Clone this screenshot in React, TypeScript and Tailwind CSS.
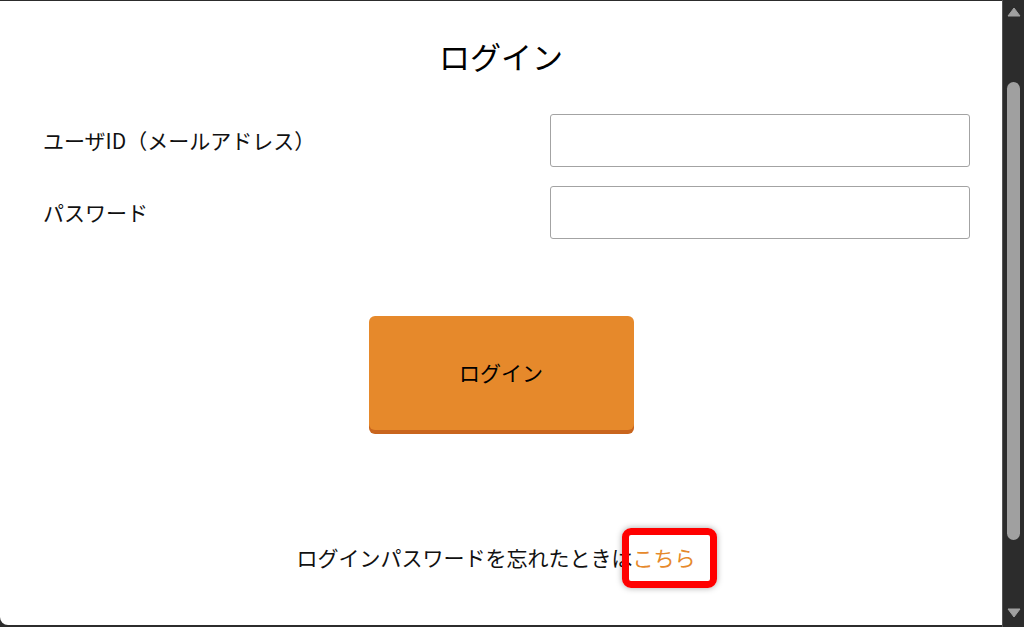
export default function App() {
  const font = { fontFamily: '"Noto Sans CJK JP", "Noto Sans", sans-serif' };

  return (
    <div className="w-[1024px] h-[627px] bg-[#2c2c2c] flex overflow-hidden" style={font}>
      <div className="flex-1 pt-[1px] pb-[2px] flex">
        <div className="relative flex-1 bg-white rounded-bl-[8px] flex flex-col items-center">
          <h1 className="mt-[33px] text-[31px] leading-[44px] text-black font-normal">ログイン</h1>

          <div className="w-full mt-[36px] pl-[43px] pr-[32px] flex flex-col gap-[19px]">
            <div className="flex items-center justify-between">
              <label className="text-[21px] text-[#111]">ユーザID（メールアドレス）</label>
              <input type="text" className="w-[420px] h-[53px] border border-[#a3a3a3] rounded-[3px] outline-none" />
            </div>
            <div className="flex items-center justify-between">
              <label className="text-[21px] text-[#111]">パスワード</label>
              <input type="password" className="w-[420px] h-[53px] border border-[#a3a3a3] rounded-[3px] outline-none" />
            </div>
          </div>

          <button className="mt-[77px] w-[265px] h-[114px] bg-[#e6892b] rounded-[6px] shadow-[0_4px_0_#c9651d] text-[21px] text-black">
            ログイン
          </button>

          <p className="mt-[112px] pr-[10px] text-[21px] leading-[31px] text-[#111]">
            ログインパスワードを忘れたときは<a className="text-[#e6892b]">こちら</a>
          </p>

          <div className="absolute left-[622px] top-[527px] w-[95px] h-[60px] border-[7px] border-[#ff0000] rounded-[9px] shadow-[0_0_6px_rgba(0,0,0,0.35)]" />
        </div>
      </div>

      <div className="w-[22px] border-l border-[#555] flex flex-col items-center pt-[7px] pb-[9px]">
        <svg width="14" height="10" viewBox="0 0 14 10">
          <path d="M7 1 L13 9 L1 9 Z" fill="#a0a0a0" stroke="#a0a0a0" strokeLinejoin="round" />
        </svg>
        <div className="mt-[65px] w-[13px] h-[458px] rounded-full bg-[#a0a0a0]" />
        <div className="flex-1" />
        <svg width="14" height="10" viewBox="0 0 14 10">
          <path d="M1 1 L13 1 L7 9 Z" fill="#a0a0a0" stroke="#a0a0a0" strokeLinejoin="round" />
        </svg>
      </div>
    </div>
  );
}
